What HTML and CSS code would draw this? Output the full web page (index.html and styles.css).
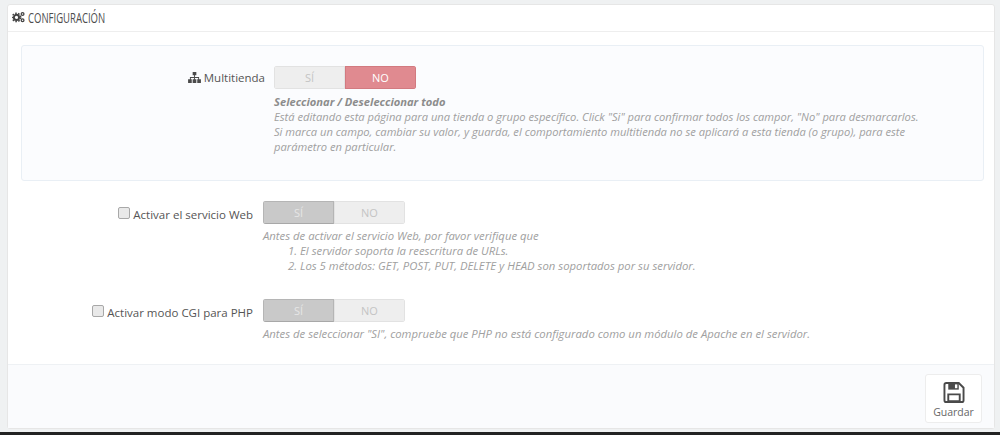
FILE: index.html
```html
<!DOCTYPE html>
<html lang="es">
<head>
    <meta charset="UTF-8">
    <title>Configuración</title>
    <link rel="stylesheet" href="styles.css">
</head>
<body>
    <div class="panel">
        <div class="panel-heading">
            <svg class="icon-cogs" viewBox="0 0 16 14" width="13" height="12">
                <circle cx="5.5" cy="7.5" r="3.2" fill="none" stroke="#444" stroke-width="2.4"/>
                <circle cx="5.5" cy="7.5" r="5.2" fill="none" stroke="#444" stroke-width="1.8" stroke-dasharray="2 1.7"/>
                <circle cx="13" cy="3.2" r="1.7" fill="none" stroke="#444" stroke-width="1.6"/>
                <circle cx="13" cy="11" r="1.7" fill="none" stroke="#444" stroke-width="1.6"/>
            </svg>
            <span class="heading-text">CONFIGURACIÓN</span>
        </div>

        <div class="panel-body">
            <div class="well">
                <div class="form-row">
                    <label class="form-label">
                        <svg class="icon-sitemap" viewBox="0 0 14 12" width="13" height="11">
                            <path d="M5 0h4v3.500H5zM0 8h4v4H0zM5 8h4v4H5zM10 8h4v4h-4zM6.500 3.500h1V5.500h4.500V8h-1V6.500H7.500V8h-1V6.500H3V8H2V5.500h4.500z" fill="#4a4a4a"/>
                        </svg>
                        Multitienda
                    </label>
                    <div class="form-field">
                        <div class="switch">
                            <span class="switch-off">SÍ</span>
                            <span class="switch-no">NO</span>
                        </div>
                        <p class="help">
                            <strong>Seleccionar / Deseleccionar todo</strong><br>
                            Está editando esta página para una tienda o grupo específico. Click "Si" para confirmar todos los campor, "No" para desmarcarlos.<br>
                            Si marca un campo, cambiar su valor, y guarda, el comportamiento multitienda no se aplicará a esta tienda (o grupo), para este<br>
                            parámetro en particular.
                        </p>
                    </div>
                </div>
            </div>

            <div class="form-row form-row-plain first-plain">
                <label class="form-label">
                    <input type="checkbox" class="check">
                    <span class="label-text">Activar el servicio Web</span>
                </label>
                <div class="form-field">
                    <div class="switch">
                        <span class="switch-si">SÍ</span>
                        <span class="switch-off">NO</span>
                    </div>
                    <p class="help">
                        Antes de activar el servicio Web, por favor verifique que<br>
                        <span class="indent">1. El servidor soporta la reescritura de URLs.</span><br>
                        <span class="indent">2. Los 5 métodos: GET, POST, PUT, DELETE y HEAD son soportados por su servidor.</span>
                    </p>
                </div>
            </div>

            <div class="form-row form-row-plain">
                <label class="form-label">
                    <input type="checkbox" class="check">
                    <span class="label-text">Activar modo CGI para PHP</span>
                </label>
                <div class="form-field">
                    <div class="switch">
                        <span class="switch-si">SÍ</span>
                        <span class="switch-off">NO</span>
                    </div>
                    <p class="help">Antes de seleccionar "SI", compruebe que PHP no está configurado como un módulo de Apache en el servidor.</p>
                </div>
            </div>
        </div>

        <div class="panel-footer">
            <button class="btn-save" type="button">
                <svg viewBox="0 0 22 22" width="22" height="21">
                    <path d="M1 3a2 2 0 0 1 2-2h13l5 5v13a2 2 0 0 1-2 2H3a2 2 0 0 1-2-2z" fill="none" stroke="#4a4a4a" stroke-width="2"/>
                    <path d="M5 1h11v7H5z" fill="#4a4a4a"/>
                    <path d="M12 2.500h2.500V6.500H12z" fill="#fff"/>
                    <path d="M5 13h12v7H5z" fill="none" stroke="#4a4a4a" stroke-width="2"/>
                </svg>
                <span>Guardar</span>
            </button>
        </div>
    </div>
    <div class="bottom-edge"></div>
</body>
</html>
```

FILE: styles.css
```css
html, body {
    margin: 0;
    height: 435px;
    overflow: hidden;
}

body {
    box-sizing: border-box;
    padding: 4px 5px 0 7px;
    background-color: #eff1f2;
    font-family: "Open Sans", sans-serif;
    font-size: 11px;
    color: #666;
}

.panel {
    box-sizing: border-box;
    height: 425px;
    display: flex;
    flex-direction: column;
    background-color: #fff;
    border: 1px solid #e6e6e6;
    border-radius: 3px;
}

.panel-heading {
    flex: none;
    box-sizing: border-box;
    height: 27px;
    display: flex;
    align-items: center;
    gap: 3px;
    padding: 0 0 2px 4px;
    border-bottom: 1px solid #eee;
    color: #4d4d4d;
}

.heading-text {
    font-size: 14px;
    transform: scaleX(0.68);
    transform-origin: left center;
    white-space: nowrap;
}

.panel-body {
    flex: 1;
    min-height: 0;
    padding: 13px 10px 0 13px;
}

.well {
    box-sizing: border-box;
    height: 136px;
    padding-top: 20px;
    background-color: #fbfcfe;
    border: 1px solid #e9eff5;
    border-radius: 3px;
}

.form-row {
    display: grid;
    grid-template-columns: 243px 1fr;
    column-gap: 9px;
}

.form-row-plain {
    grid-template-columns: 232px 1fr;
    column-gap: 10px;
    margin-bottom: 26px;
}

.first-plain {
    margin-top: 20px;
}

.form-label {
    display: flex;
    justify-content: flex-end;
    align-items: center;
    gap: 3px;
    height: 23px;
    font-size: 11.500px;
    color: #555;
}

.icon-sitemap {
    flex: none;
}

.label-text {
    padding-top: 4px;
}

.check {
    appearance: none;
    box-sizing: border-box;
    width: 12px;
    height: 12px;
    margin: 0;
    background-color: #e9e9e9;
    border: 1px solid #a8a8a8;
    border-radius: 2px;
}

.switch {
    display: flex;
    width: 142px;
    height: 23px;
    border-radius: 3px;
    overflow: hidden;
    font-size: 11px;
    line-height: 21px;
    text-align: center;
}

.switch span {
    flex: 1;
    box-sizing: border-box;
}

.switch-off {
    background-color: #eeeeee;
    border: 1px solid #e2e2e2;
    color: #c4c4c4;
}

.switch-si {
    background-color: #c9c9c9;
    border: 1px solid #b5b5b5;
    border-bottom-color: #a8a8a8;
    color: #e6e6e6;
}

.switch-no {
    background-color: #e08a90;
    border: 1px solid #d27a80;
    color: #fff;
}

.help {
    margin: 5px 0 0;
    font-size: 11.170px;
    font-style: italic;
    line-height: 15px;
    color: #a0a0a0;
    white-space: nowrap;
}

.form-row-plain .help {
    margin-top: 4px;
    font-size: 11.320px;
}

.help strong {
    color: #8c8c8c;
}

.indent {
    padding-left: 25px;
}

.panel-footer {
    flex: none;
    height: 64px;
    box-sizing: border-box;
    display: flex;
    justify-content: flex-end;
    padding: 9px 12px 0 0;
    background-color: #fafbfd;
    border-top: 1px solid #eef1f4;
}

.btn-save {
    box-sizing: border-box;
    width: 57px;
    height: 49px;
    display: flex;
    flex-direction: column;
    align-items: center;
    gap: 2px;
    padding: 7px 0 0;
    background-color: #fff;
    border: 1px solid #ededed;
    border-radius: 3px;
    font-family: "Open Sans", sans-serif;
    font-size: 10.500px;
    color: #666;
}

.bottom-edge {
    height: 3px;
    margin: 3px -5px 0 -7px;
    background-color: #222;
}
```
